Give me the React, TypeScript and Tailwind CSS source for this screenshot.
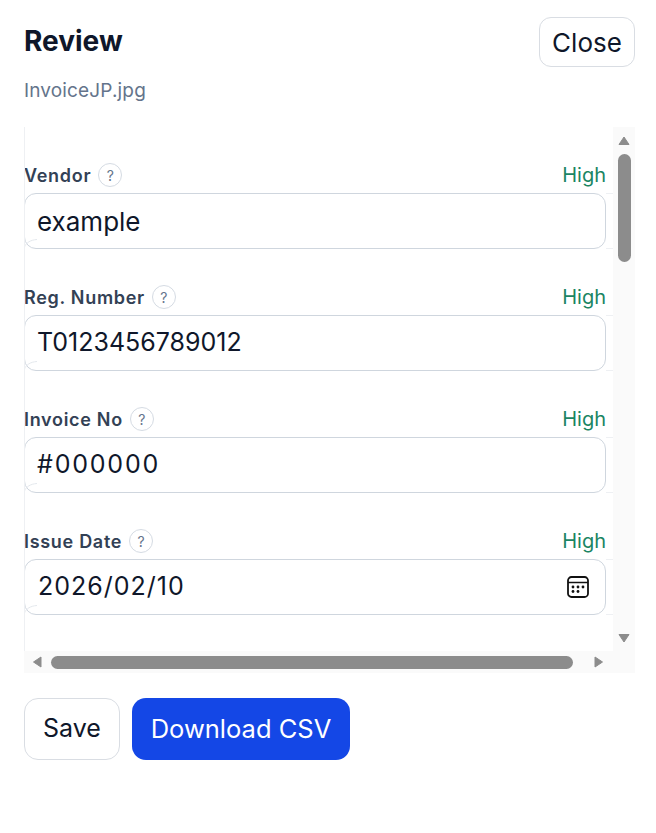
const ff = { fontFamily: 'Inter, sans-serif' };

function Field({ label, value, date, valueClass }: { label: string; value: string; date?: boolean; valueClass: string }) {
  return (
    <div className="h-[122px] shrink-0 pt-[24px] -ml-px">
      <div className="flex items-center justify-between h-[24px] w-[582px]">
        <div className="flex items-center gap-[7px]">
          <span className="text-[18px] font-semibold tracking-[0.7px] text-[#334155]">{label}</span>
          <span className="w-[24px] h-[24px] rounded-full border border-[#d5dbe3] flex items-center justify-center text-[14px] text-[#64748b]">?</span>
        </div>
        <span className="text-[20px] text-[#1b8563]">High</span>
      </div>
      <div className="mt-[6px] flex h-[56px]">
        <div className="relative w-[582px] rounded-[12px] border border-[#cfd6de] bg-white flex items-center justify-between pl-[12px] pr-[16px]">
          <span className={valueClass}>{value}</span>
          {date && (
            <svg width="22" height="22" viewBox="0 0 22 22" fill="none">
              <rect x="1" y="1" width="20" height="20" rx="3.5" stroke="#111" strokeWidth="1.8" />
              <path d="M1 6.5h20" stroke="#111" strokeWidth="1.5" />
              <g fill="#111">
                <circle cx="6" cy="11" r="1.4" /><circle cx="11" cy="11" r="1.4" /><circle cx="16" cy="11" r="1.4" />
                <circle cx="6" cy="15.5" r="1.4" /><circle cx="11" cy="15.5" r="1.4" />
              </g>
            </svg>
          )}
          <svg className="absolute -left-px bottom-0" width="14" height="9" viewBox="0 0 14 9" fill="none">
            <path d="M0.5 8 C2 4 6 1 13 0.5" stroke="#e4e8ed" />
          </svg>
        </div>
        <div className="flex-1 border-y border-[#eef0f3]" />
      </div>
    </div>
  );
}

function Arrow({ d }: { d: string }) {
  return (
    <svg className="shrink-0" width="12" height="12" viewBox="0 0 12 12"><path d={d} fill="#8c8c8c" strokeLinejoin="round" stroke="#8c8c8c" strokeWidth="1" /></svg>
  );
}

export default function App() {
  return (
    <div style={ff} className="w-[656px] h-[833px] bg-white px-[24px] pt-[17px]">
      <div className="flex items-start justify-between w-[611px]">
        <h1 className="text-[28px] font-bold text-[#0f172a] mt-[3px]">Review</h1>
        <button className="h-[50px] w-[96px] rounded-[12px] border border-[#d9dde3] text-[26px] text-[#0f172a]">Close</button>
      </div>
      <p className="mt-[12px] text-[19px] tracking-[0.15px] leading-[24px] text-[#64748b]">InvoiceJP.jpg</p>
      <div className="mt-[24px] w-[611px] h-[546px] grid grid-cols-[589px_22px] grid-rows-[524px_22px] bg-[#fafafa]">
        <div className="bg-white overflow-hidden flex flex-col pt-[12px] border-l border-[#eef0f3]">
          <Field label="Vendor" value="example" valueClass="text-[26px] text-[#0f172a]" />
          <Field label="Reg. Number" value="T0123456789012" valueClass="text-[25px] text-[#0f172a]" />
          <Field label="Invoice No" value="#000000" valueClass="text-[25px] tracking-[1.8px] text-[#0f172a]" />
          <Field label="Issue Date" value="2026/02/10" date valueClass="text-[25px] tracking-[1px] ml-[1px] text-[#0f172a]" />
        </div>
        <div className="flex flex-col items-center pt-[8px] pb-[7px]">
          <Arrow d="M6 2 L11 9.5 H1 Z" />
          <div className="mt-[7px] w-[13px] h-[108px] rounded-full bg-[#8c8c8c]" />
          <div className="flex-1" />
          <Arrow d="M6 10 L1 2.5 H11 Z" />
        </div>
        <div className="flex items-center pl-[7px] pr-[8px]">
          <Arrow d="M2.5 6 L10 1 V11 Z" />
          <div className="ml-[8px] w-[522px] h-[13px] rounded-full bg-[#8c8c8c]" />
          <div className="flex-1" />
          <Arrow d="M9.5 6 L2 1 V11 Z" />
        </div>
        <div />
      </div>
      <div className="mt-[25px] flex gap-[12px]">
        <button className="h-[62px] w-[96px] rounded-[14px] border border-[#d9dde3] text-[25px] text-[#0f172a]">Save</button>
        <button className="h-[62px] w-[218px] rounded-[14px] bg-[#1447e6] text-[25.5px] text-white">Download CSV</button>
      </div>
    </div>
  );
}
